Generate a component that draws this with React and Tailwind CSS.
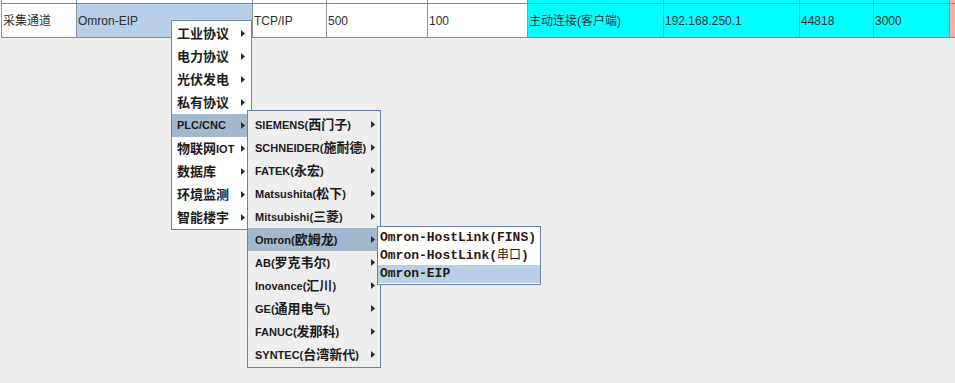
const cells = [
  { text: "采集通道", w: "w-[75px]", bg: "bg-white" },
  { text: "Omron-EIP", w: "w-[176px]", bg: "bg-[#b8cfe5]" },
  { text: "TCP/IP", w: "w-[74px]", bg: "bg-white" },
  { text: "500", w: "w-[101px]", bg: "bg-white" },
  { text: "100", w: "w-[100px]", bg: "bg-white" },
  { text: "主动连接(客户端)", w: "w-[136px]", bg: "bg-[#00ffff]" },
  { text: "192.168.250.1", w: "w-[136px]", bg: "bg-[#00ffff]" },
  { text: "44818", w: "w-[74px]", bg: "bg-[#00ffff]" },
  { text: "3000", w: "w-[76px]", bg: "bg-[#00ffff]" },
  { text: "", w: "flex-1", bg: "bg-[#ffafaf]" },
];

const topMenu = ["工业协议", "电力协议", "光伏发电", "私有协议", "PLC/CNC", "物联网IOT", "数据库", "环境监测", "智能楼宇"];

const brands = [
  "SIEMENS(西门子)",
  "SCHNEIDER(施耐德)",
  "FATEK(永宏)",
  "Matsushita(松下)",
  "Mitsubishi(三菱)",
  "Omron(欧姆龙)",
  "AB(罗克韦尔)",
  "Inovance(汇川)",
  "GE(通用电气)",
  "FANUC(发那科)",
  "SYNTEC(台湾新代)",
];

const drivers = ["Omron-HostLink(FINS)", "Omron-HostLink(串口)", "Omron-EIP"];

// CJK runs get their own size, latin stays small like the Swing Dialog font
const Label = ({ text, cjk }) => (
  <span className="whitespace-nowrap">
    {text.split(/([\u3400-\u9fff]+)/).map((part, i) =>
      /[\u3400-\u9fff]/.test(part) ? (
        <span key={i} className={cjk}>
          {part}
        </span>
      ) : (
        <span key={i}>{part}</span>
      )
    )}
  </span>
);

const Arrow = () => (
  <svg width="4" height="7" viewBox="0 0 4 7" className="shrink-0">
    <path d="M0 0L4 3.5L0 7Z" fill="#2b2b2b" />
  </svg>
);

const App = () => (
  <div className="relative h-[383px] w-full overflow-hidden bg-[#eeeeee] font-['Liberation_Sans','Noto_Sans_CJK_SC',sans-serif]">
    {/* Table */}
    <div className="bg-white pl-[1px]">
      <div className="flex h-[3px]">
        {cells.map((c, i) => (
          <div key={i} className={`${c.w} shrink-0 border-l border-[#8796a5] ${i > 4 ? c.bg : "bg-white"}`} />
        ))}
      </div>
      <div className="flex h-[35px] border-y border-[#7d8c9b]">
        {cells.map((c, i) => (
          <div
            key={i}
            className={`${c.w} ${c.bg} flex shrink-0 items-center border-l border-[#8796a5] pl-[1px] text-[12px] text-[#2e2e2e]`}
          >
            {c.text}
          </div>
        ))}
      </div>
    </div>

    {/* Protocol menu */}
    <div className="absolute left-[171px] top-[20px] w-[81px] border border-[#6382bf] bg-white pt-[1px] text-[11px] font-bold text-[#1c1c1c]">
      {topMenu.map((t) => (
        <div
          key={t}
          className={`flex h-[23px] items-center justify-between pl-[5px] pr-[6px] ${t === "PLC/CNC" ? "bg-[#a3b8cc]" : ""}`}
        >
          <Label text={t} cjk="text-[13px]" />
          <Arrow />
        </div>
      ))}
    </div>

    {/* Brand submenu */}
    <div className="absolute left-[247px] top-[110px] w-[134px] border border-[#6382bf] bg-[#eeeeee] pb-[1px] pt-[2px] text-[11px] font-bold text-[#1c1c1c]">
      {brands.map((t) => (
        <div
          key={t}
          className={`flex h-[23px] items-center justify-between pl-[7px] pr-[5px] ${t.startsWith("Omron") ? "bg-[#a3b8cc]" : ""}`}
        >
          <Label text={t} cjk="text-[13px]" />
          <Arrow />
        </div>
      ))}
    </div>

    {/* Driver submenu */}
    <div className="absolute left-[377px] top-[226px] w-[164px] border border-[#6382bf] bg-white pb-[1px] pt-[2px] font-['Liberation_Mono','Noto_Sans_CJK_SC',monospace] text-[13px] font-bold text-[#2a1a14]">
      {drivers.map((t) => (
        <div
          key={t}
          className={`flex h-[18px] items-center pl-[2px] ${t === "Omron-EIP" ? "bg-[#b8cfe5]" : ""}`}
        >
          <Label text={t} cjk="text-[12px] font-normal" />
        </div>
      ))}
    </div>
  </div>
);

export default App;
